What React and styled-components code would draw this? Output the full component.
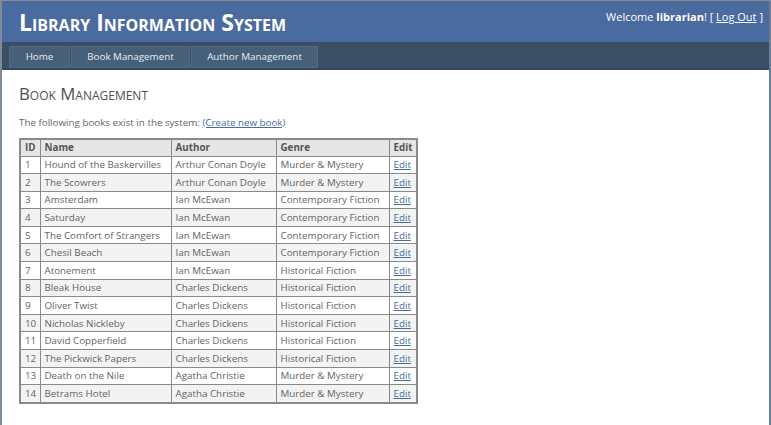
import React from "react";
import styled, { createGlobalStyle } from "styled-components";

const Global = createGlobalStyle`
  html, body { margin: 0; padding: 0; background: #fff; }
  body { font-family: "Open Sans", "Noto Sans", sans-serif; }
`;

const Page = styled.div`
  width: 771px;
  height: 425px;
  box-sizing: border-box;
  border-top: 1px solid #8c8c8c;
  border-left: 2px solid #7d8b9a;
  border-right: 2px solid #6b7f98;
  display: flex;
  flex-direction: column;
  background: #fff;
  overflow: hidden;
`;

const Header = styled.header`
  height: 41px;
  background: #4a6b9f;
  display: flex;
  justify-content: space-between;
  align-items: flex-start;
  padding: 0 6px 0 17px;
`;

const Title = styled.h1`
  margin: 7px 0 0;
  font-size: 23px;
  font-weight: 700;
  font-variant: small-caps;
  color: #fff;
  letter-spacing: 0;
  line-height: 28px;
`;

const Login = styled.div`
  margin-top: 9px;
  font-size: 11px;
  color: #fff;
  line-height: 14px;
  b { font-weight: 700; }
  a { color: #fff; text-decoration: underline; }
`;

const Nav = styled.nav`
  height: 28px;
  box-sizing: border-box;
  background: #3b4f64;
  border-bottom: 2px solid #34475a;
  padding: 4px 0 0 7px;
  display: flex;
  align-items: flex-start;
`;

const NavItem = styled.a`
  display: block;
  box-sizing: border-box;
  height: 22px;
  width: ${(p) => p.w}px;
  line-height: 20px;
  text-align: center;
  font-size: 9.8px;
  color: #e6ebf0;
  background: #46607a;
  border: 1px solid #526b83;
  margin-right: 1px;
  text-decoration: none;
`;

const Main = styled.main`
  flex: 1;
  padding: 14px 17px 0;
  color: #646464;
`;

const Heading = styled.h2`
  margin: 0;
  font-size: 16.8px;
  font-weight: 400;
  font-variant: small-caps;
  color: #505050;
  line-height: 20px;
`;

const Intro = styled.p`
  margin: 12px 0 0;
  font-size: 9.8px;
  line-height: 14px;
  a { color: #4a6b9f; text-decoration: underline; }
`;

const Table = styled.table`
  margin-top: 8px;
  border-collapse: collapse;
  border: 2px solid #8a8a8a;
  font-size: 9.8px;
  table-layout: fixed;
  width: 397px;
`;

const Th = styled.th`
  background: #e6e6e6;
  color: #555;
  font-weight: 700;
  text-align: left;
  height: 17px;
  padding: 0 4px;
  border: 1px solid #8a8a8a;
  width: ${(p) => p.w}px;
  box-sizing: border-box;
`;

const Tr = styled.tr`
  background: ${(p) => (p.alt ? "#f3f3f3" : "#fff")};
`;

const Td = styled.td`
  height: 16.6px;
  padding: 0 4px;
  border: 1px solid #8a8a8a;
  white-space: nowrap;
  overflow: hidden;
  a { color: #4a6b9f; text-decoration: underline; }
`;

const books = [
  [1, "Hound of the Baskervilles", "Arthur Conan Doyle", "Murder & Mystery"],
  [2, "The Scowrers", "Arthur Conan Doyle", "Murder & Mystery"],
  [3, "Amsterdam", "Ian McEwan", "Contemporary Fiction"],
  [4, "Saturday", "Ian McEwan", "Contemporary Fiction"],
  [5, "The Comfort of Strangers", "Ian McEwan", "Contemporary Fiction"],
  [6, "Chesil Beach", "Ian McEwan", "Contemporary Fiction"],
  [7, "Atonement", "Ian McEwan", "Historical Fiction"],
  [8, "Bleak House", "Charles Dickens", "Historical Fiction"],
  [9, "Oliver Twist", "Charles Dickens", "Historical Fiction"],
  [10, "Nicholas Nickleby", "Charles Dickens", "Historical Fiction"],
  [11, "David Copperfield", "Charles Dickens", "Historical Fiction"],
  [12, "The Pickwick Papers", "Charles Dickens", "Historical Fiction"],
  [13, "Death on the Nile", "Agatha Christie", "Murder & Mystery"],
  [14, "Betrams Hotel", "Agatha Christie", "Murder & Mystery"],
];

export default function App() {
  return (
    <>
      <Global />
      <Page>
        <Header>
          <Title>Library Information System</Title>
          <Login>
            Welcome <b>librarian</b>! [ <a href="#">Log Out</a> ]
          </Login>
        </Header>
        <Nav>
          <NavItem w={61} href="#">Home</NavItem>
          <NavItem w={119} href="#">Book Management</NavItem>
          <NavItem w={127} href="#">Author Management</NavItem>
        </Nav>
        <Main>
          <Heading>Book Management</Heading>
          <Intro>
            The following books exist in the system: <a href="#">(Create new book)</a>
          </Intro>
          <Table>
            <thead>
              <tr>
                <Th w={20}>ID</Th>
                <Th w={131}>Name</Th>
                <Th w={105}>Author</Th>
                <Th w={113}>Genre</Th>
                <Th w={28}>Edit</Th>
              </tr>
            </thead>
            <tbody>
              {books.map((b, i) => (
                <Tr key={b[0]} alt={i % 2 === 1}>
                  <Td>{b[0]}</Td>
                  <Td>{b[1]}</Td>
                  <Td>{b[2]}</Td>
                  <Td>{b[3]}</Td>
                  <Td><a href="#">Edit</a></Td>
                </Tr>
              ))}
            </tbody>
          </Table>
        </Main>
      </Page>
    </>
  );
}
